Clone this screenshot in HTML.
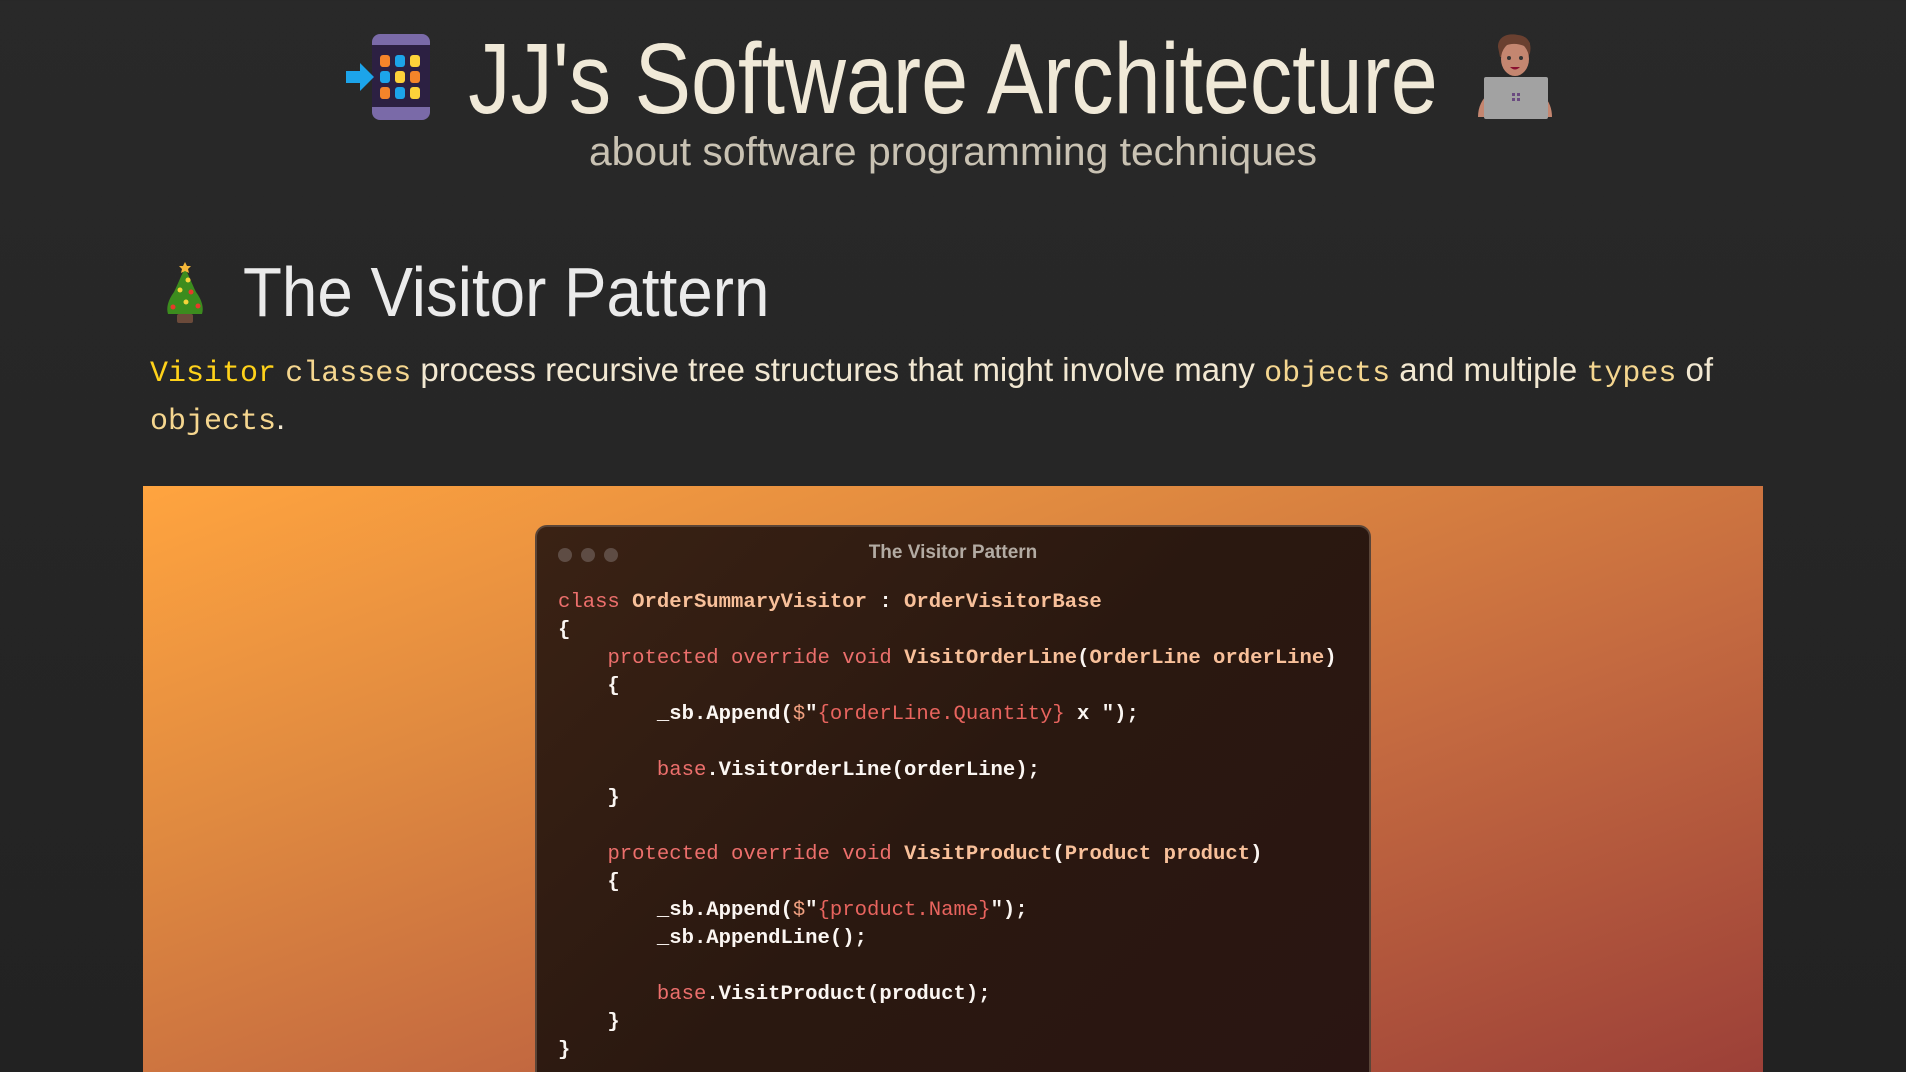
<!DOCTYPE html>
<html><head><meta charset="utf-8"><style>
html,body{margin:0;padding:0;width:1906px;height:1072px;overflow:hidden}
body{background:linear-gradient(#292929,#222 1072px);position:relative;font-family:"Liberation Sans",sans-serif}
.abs{position:absolute;white-space:nowrap}
.title{left:0;width:1906px;text-align:center;top:24px;font-size:100px;line-height:110px;color:#f0e9d8;transform:scaleX(0.845);transform-origin:953px 0}
.sub{left:0;width:1906px;text-align:center;top:128px;font-size:40px;line-height:48px;color:#c9c2b3;transform:scaleX(1.02);transform-origin:953px 0}
.h2{left:243px;top:252px;font-size:70px;line-height:80px;color:#ebebeb;transform:scaleX(0.91);transform-origin:0 0}
.p{left:150px;font-size:33px;line-height:40px;color:#f2e8d2}
.p code{font-family:"Liberation Mono",monospace;font-size:30px;color:#f5d68f}
.p code.y{color:#ffd21a}
.grad{left:143px;top:486px;width:1620px;height:586px;background:linear-gradient(160deg,#ffa43f 0%,#e08a40 30%,#c46a40 60%,#9c4038 100%)}
.win{left:535px;top:525px;width:832px;height:560px;border:2px solid #5a4538;border-radius:12px;background:linear-gradient(135deg,#3a2214,#2a1810 50%,#2a1512)}
.dot{position:absolute;top:21px;width:14px;height:14px;border-radius:50%;background:#5e4c44}
.wt{position:absolute;top:15px;left:0;width:832px;text-align:center;font-size:19px;font-weight:bold;color:#b3aba3}
pre{position:absolute;left:21px;top:62px;margin:0;font-family:"Liberation Mono",monospace;font-size:20.6px;line-height:28px;color:#fbf6f2;font-weight:bold}
.k{color:#ec6f6c;font-weight:normal}.n{color:#f8c09a}.s{color:#e8645e;font-weight:normal}.d{color:#f0a080;font-weight:normal}
</style></head><body>

<svg class="abs" style="left:344px;top:33px" width="90" height="90" viewBox="0 0 90 90">
<rect x="28" y="1" width="58" height="86" rx="8" fill="#7a6aa8"/>
<rect x="28" y="12" width="58" height="62" fill="#2c2042"/>
<g>
<rect x="36" y="22" width="10" height="12" rx="3" fill="#f5842a"/><rect x="51" y="22" width="10" height="12" rx="3" fill="#1ca4ea"/><rect x="66" y="22" width="10" height="12" rx="3" fill="#fdd23a"/>
<rect x="36" y="38" width="10" height="12" rx="3" fill="#1ca4ea"/><rect x="51" y="38" width="10" height="12" rx="3" fill="#fdd23a"/><rect x="66" y="38" width="10" height="12" rx="3" fill="#f5842a"/>
<rect x="36" y="54" width="10" height="12" rx="3" fill="#f5842a"/><rect x="51" y="54" width="10" height="12" rx="3" fill="#1ca4ea"/><rect x="66" y="54" width="10" height="12" rx="3" fill="#fdd23a"/>
</g>
<path d="M2 38 H16 V30 L30 44 L16 58 V50 H2 Z" fill="#1ca4ea"/>
</svg>

<div class="abs title">JJ's Software Architecture</div>

<svg class="abs" style="left:1474px;top:33px" width="92" height="90" viewBox="0 0 92 90">
<path d="M24 14 C24 2 36 0 44 2 C54 3 58 10 56 20 L54 24 L26 24 Z" fill="#6a4030"/>
<ellipse cx="41" cy="26" rx="14" ry="17" fill="#c48670"/>
<path d="M26 18 C30 10 44 8 56 16 L56 10 C48 0 30 0 26 10Z" fill="#6a4030"/>
<circle cx="35" cy="25" r="2" fill="#333"/><circle cx="47" cy="25" r="2" fill="#333"/>
<path d="M36 34 Q41 39 46 34 Z" fill="#8a1030"/>
<path d="M4 84 C4 64 20 52 41 52 C62 52 78 64 78 84Z" fill="#c48670"/>
<rect x="10" y="44" width="64" height="42" rx="2" fill="#a2a2a2"/>
<rect x="38" y="60" width="3" height="3" fill="#6a4a80"/><rect x="43" y="60" width="3" height="3" fill="#6a4a80"/>
<rect x="38" y="65" width="3" height="3" fill="#6a4a80"/><rect x="43" y="65" width="3" height="3" fill="#6a4a80"/>
</svg>

<div class="abs sub">about software programming techniques</div>

<svg class="abs" style="left:160px;top:262px" width="50" height="62" viewBox="0 0 50 62">
<path d="M25 6 C20 16 18 22 14 30 C8 38 6 46 8 52 L42 52 C44 46 42 38 36 30 C32 22 30 16 25 6Z" fill="#3c8c1e"/>
<rect x="17" y="52" width="16" height="9" rx="2" fill="#6b4a3a"/>
<path d="M25 0 L27 4 L31 4 L28 7 L29 11 L25 9 L21 11 L22 7 L19 4 L23 4Z" fill="#f6b93a"/>
<circle cx="28" cy="18" r="2.5" fill="#f6d43a"/><circle cx="20" cy="28" r="2.5" fill="#f6d43a"/><circle cx="31" cy="30" r="2.5" fill="#e83a2a"/>
<circle cx="26" cy="40" r="2.5" fill="#f6d43a"/><circle cx="13" cy="45" r="2.5" fill="#e83a2a"/><circle cx="38" cy="44" r="2.5" fill="#e83a2a"/>
</svg>
<div class="abs h2">The Visitor Pattern</div>

<div class="abs p" style="top:350px"><code class="y">Visitor</code> <code>classes</code> process recursive tree structures that might involve many <code>objects</code> and multiple <code>types</code> of</div>
<div class="abs p" style="top:398px"><code>objects</code>.</div>

<div class="abs grad"></div>
<div class="abs win">
<div class="dot" style="left:21px"></div><div class="dot" style="left:44px"></div><div class="dot" style="left:67px"></div>
<div class="wt">The Visitor Pattern</div>
<pre><span class="k">class</span> <span class="n">OrderSummaryVisitor</span> : <span class="n">OrderVisitorBase</span>
{
    <span class="k">protected</span> <span class="k">override</span> <span class="k">void</span> <span class="n">VisitOrderLine</span>(<span class="n">OrderLine orderLine</span>)
    {
        _sb.Append(<span class="d">$</span>"<span class="s">{orderLine.Quantity}</span> x ");

        <span class="k">base</span>.VisitOrderLine(orderLine);
    }

    <span class="k">protected</span> <span class="k">override</span> <span class="k">void</span> <span class="n">VisitProduct</span>(<span class="n">Product product</span>)
    {
        _sb.Append(<span class="d">$</span>"<span class="s">{product.Name}</span>");
        _sb.AppendLine();

        <span class="k">base</span>.VisitProduct(product);
    }
}</pre>
</div>
</body></html>
